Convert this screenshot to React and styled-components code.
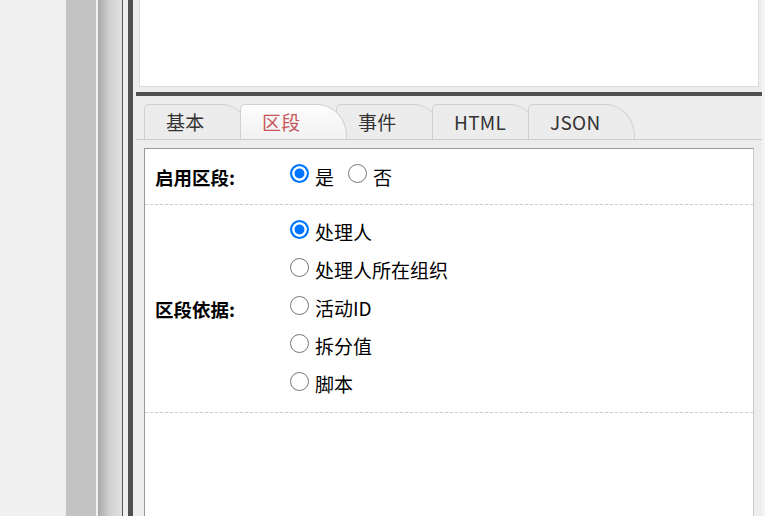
import React from "react";
import styled, { createGlobalStyle } from "styled-components";

const tabs = ["基本", "区段", "事件", "HTML", "JSON"];
const bases = ["处理人", "处理人所在组织", "活动ID", "拆分值", "脚本"];

const App = () => {
  return (
    <>
      <GlobalStyle />
      <Frame>
        <SidePane />
        <ScrollTrack />
        <Shade />
        <Gutter />
        <Splitter />
        <MainPane>
          <Preview />
          <HSplitter />
          <PropsPane>
            <TabBar>
              {tabs.map((t) => (
                <Tab key={t} $active={t === "区段"}>
                  {t}
                </Tab>
              ))}
            </TabBar>
            <Panel>
              <Row>
                <Label>启用区段:</Label>
                <Options $inline>
                  <Option>
                    <Radio type="radio" name="enable" defaultChecked />
                    <span>是</span>
                  </Option>
                  <Option>
                    <Radio type="radio" name="enable" />
                    <span>否</span>
                  </Option>
                </Options>
              </Row>
              <Row>
                <Label>区段依据:</Label>
                <Options>
                  {bases.map((b, i) => (
                    <Option key={b} $stacked>
                      <Radio type="radio" name="base" defaultChecked={i === 0} />
                      <span>{b}</span>
                    </Option>
                  ))}
                </Options>
              </Row>
            </Panel>
          </PropsPane>
        </MainPane>
        <EdgeStrip />
      </Frame>
    </>
  );
};

export default App;

const GlobalStyle = createGlobalStyle`
  html, body {
    margin: 0;
    padding: 0;
    overflow: hidden;
    background: #f0f0f0;
  }
  body {
    font-family: "Noto Sans CJK SC", "Noto Sans", sans-serif;
  }
`;

const Frame = styled.div`
  display: flex;
  width: 765px;
  height: 516px;
  overflow: hidden;
`;

const SidePane = styled.div`
  flex: none;
  width: 66px;
  background: #f0f0f0;
`;

const ScrollTrack = styled.div`
  flex: none;
  width: 30px;
  background: #c3c3c3;
  border-right: 2px solid #f2f2f2;
`;

const Shade = styled.div`
  flex: none;
  width: 24px;
  background: linear-gradient(to right, #a8a8a8, #cfcfcf 45%, #e2e2e2);
  border-right: 1px solid #555;
`;

const Gutter = styled.div`
  flex: none;
  width: 5px;
  background: #eeeeee;
`;

const Splitter = styled.div`
  flex: none;
  width: 5px;
  background: #505050;
`;

const MainPane = styled.div`
  flex: none;
  width: 629px;
  display: flex;
  flex-direction: column;
  background: #ededed;
`;

const EdgeStrip = styled.div`
  flex: 1;
  background: #f4f4f4;
`;

const Preview = styled.div`
  flex: none;
  height: 86px;
  margin: 0 3px 0 6px;
  background: #fff;
  border: 1px solid #dcdcdc;
  border-top: none;
`;

const HSplitter = styled.div`
  flex: none;
  height: 4px;
  margin: 5px 0 0 3px;
  background: #505050;
`;

const PropsPane = styled.div`
  flex: 1;
  display: flex;
  flex-direction: column;
  margin-left: 3px;
  min-height: 0;
`;

const TabBar = styled.div`
  flex: none;
  display: flex;
  padding: 8px 0 0 8px;
  border-bottom: 1px solid #cccccc;
`;

const Tab = styled.div`
  position: relative;
  z-index: ${({ $active }) => ($active ? 2 : "auto")};
  box-sizing: border-box;
  width: 107px;
  height: 35px;
  padding-left: 21px;
  border: 1px solid #d0d0d0;
  border-bottom: none;
  border-radius: 5px 30px 0 0 / 5px 32px 0 0;
  background: ${({ $active }) =>
    $active ? "linear-gradient(#fdfdfd, #f1f1f1)" : "#ececec"};
  color: ${({ $active }) => ($active ? "#c8555a" : "#333")};
  font-size: 19px;
  line-height: 33px;
  letter-spacing: 0.3px;
  white-space: nowrap;

  & + & {
    margin-left: -11px;
  }
`;

const Panel = styled.div`
  flex: 1;
  margin: 8px 8px 0 8px;
  background: #fff;
  border: 1px solid #999;
  border-right-color: #cccccc;
  border-bottom: none;
`;

const Row = styled.div`
  display: grid;
  grid-template-columns: 135px 1fr;
  border-bottom: 1px dashed #cccccc;
`;

const Label = styled.div`
  display: flex;
  align-items: center;
  padding-left: 10px;
  font-size: 18.5px;
  font-weight: bold;
  color: #000;
`;

const Options = styled.div`
  display: flex;
  flex-direction: ${({ $inline }) => ($inline ? "row" : "column")};
  align-items: ${({ $inline }) => ($inline ? "center" : "flex-start")};
  height: ${({ $inline }) => ($inline ? "55px" : "auto")};
  padding: ${({ $inline }) => ($inline ? "0 0 0 10px" : "8px 0 9px 10px")};
  box-sizing: border-box;
`;

const Option = styled.label`
  display: flex;
  align-items: center;
  height: ${({ $stacked }) => ($stacked ? "38px" : "auto")};
  margin-right: 14px;
  font-size: 19px;
  color: #000;

  span {
    margin-left: 6px;
    line-height: 24px;
  }
`;

const Radio = styled.input`
  appearance: none;
  box-sizing: border-box;
  flex: none;
  width: 19px;
  height: 19px;
  margin: 0 0 6px 0;
  border: 1.5px solid #767676;
  border-radius: 50%;
  background: #fff;

  &:checked {
    border: 2px solid #0075ff;
    background: #0075ff;
    box-shadow: inset 0 0 0 2.5px #fff;
  }
`;
